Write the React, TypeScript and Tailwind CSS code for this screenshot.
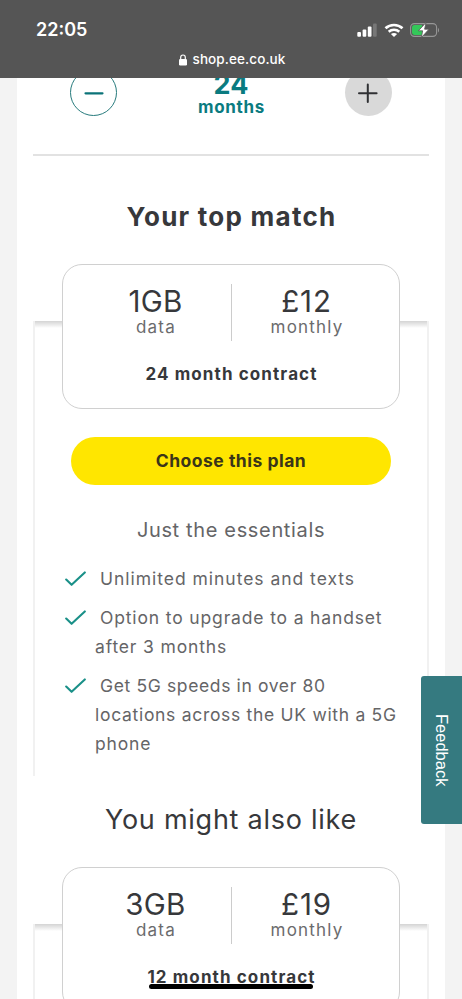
import React from 'react';

const Tick = () => (
  <svg className="absolute left-0 top-[7px]" width="21" height="16" viewBox="0 0 21 16" fill="none">
    <path d="M1.2 8.6L6.6 13.8L19.8 1.4" stroke="#1a9088" strokeWidth="2.1" strokeLinecap="round" strokeLinejoin="round" />
  </svg>
);

const StatusBar = () => (
  <header className="relative z-10 h-[78px] bg-[#555555] text-white">
    <div className="flex h-[60px] items-center justify-between pl-9 pr-[22px]">
      <span className="text-[18px] font-semibold leading-none">22:05</span>
      <div className="flex items-center">
        <svg width="21" height="14" viewBox="0 0 21 14">
          <rect x="0.3" y="9" width="3.7" height="4.8" rx="1" fill="#fff" />
          <rect x="5.6" y="6.4" width="3.7" height="7.4" rx="1" fill="#fff" />
          <rect x="10.8" y="3.4" width="3.7" height="10.4" rx="1" fill="#fff" />
          <rect x="16" y="0.4" width="3.7" height="13.4" rx="1" fill="#777" />
        </svg>
        <svg className="ml-1.5" width="20" height="15" viewBox="0 0 20 15" fill="none" stroke="#fff">
          <path d="M1.5 5.2C6.2 0.9 13.8 0.9 18.5 5.2" strokeWidth="2.7" />
          <path d="M4.7 8.7C7.7 6 12.3 6 15.3 8.7" strokeWidth="2.6" />
          <path d="M10 14L6.9 11C8.6 9.5 11.4 9.5 13.1 11Z" fill="#fff" stroke="none" />
        </svg>
        <svg className="ml-1.5" width="30" height="16" viewBox="0 0 30 16">
          <rect x="0.6" y="1.6" width="26" height="12.8" rx="3.8" fill="none" stroke="#979797" strokeWidth="1.1" />
          <path d="M4.5 3H12V13H4.5A2.4 2.4 0 0 1 2 10.6V5.4A2.4 2.4 0 0 1 4.5 3Z" fill="#34c759" />
          <path d="M28 6V10.4C29.4 9.8 29.4 6.6 28 6Z" fill="#979797" />
          <path d="M16 0.6L8.4 8.8H12.6L11.4 15.6L19 7.2H14.6Z" fill="#fff" stroke="#555555" strokeWidth="0.8" />
        </svg>
      </div>
    </div>
    <div className="-mt-2 flex items-center justify-center pl-[2px]">
      <svg width="8" height="12" viewBox="0 0 8 12">
        <rect x="0" y="5" width="8" height="6.5" rx="1.2" fill="#fff" />
        <path d="M1.7 5.5V3.3A2.3 2.3 0 0 1 6.3 3.3V5.5" fill="none" stroke="#fff" strokeWidth="1.2" />
      </svg>
      <span className="ml-[6px] text-[13.5px] font-medium leading-[15px] tracking-[0.1px]">shop.ee.co.uk</span>
    </div>
  </header>
);

const Stepper = () => (
  <div className="-mt-[9px] flex h-[87px] items-start justify-between border-b-2 border-[#e2e2e2] px-[37px]">
    <button className="flex h-[47px] w-[47px] items-center justify-center rounded-full border border-[#277b7d]">
      <svg width="20" height="20" viewBox="0 0 20 20">
        <path d="M1.5 10.3H18.5" stroke="#0b7378" strokeWidth="2.2" strokeLinecap="round" />
      </svg>
    </button>
    <div className="text-center font-bold text-[#0a7b80]">
      <div className="h-[29px] text-[27px] leading-[31px]">24</div>
      <div className="pl-px text-[17px] leading-[18px] tracking-[0.7px]">months</div>
    </div>
    <button className="flex h-[47px] w-[47px] items-center justify-center rounded-full bg-[#d9d9d9]">
      <svg width="20" height="20" viewBox="0 0 20 20">
        <path d="M1 10.3H18.6M9.8 1.5V19" stroke="#303134" strokeWidth="2" strokeLinecap="round" />
      </svg>
    </button>
  </div>
);

interface PlanProps {
  data: string;
  price: string;
  contract: string;
  children?: React.ReactNode;
}

const Plan = ({ data, price, contract, children }: PlanProps) => (
  <section className="mt-[86px] h-[455px] border-x-2 border-[#f1f1f1] bg-[linear-gradient(#d4d4d4,#ececec_4px,#ffffff_7px)]">
    <div className="relative -top-[57px] mx-auto h-[145px] w-[338px] rounded-[20px] border border-[#d0d0d0] bg-white pt-[21px]">
      <div className="flex justify-center text-center">
        <div className="w-[150px]">
          <div className="text-[29.5px] leading-[31px] tracking-[0.3px] text-[#37383b]">{data}</div>
          <div className="pl-px text-[17px] leading-[21px] tracking-[1.2px] text-[#6b6b6d]">data</div>
        </div>
        <div className="-mt-0.5 h-[57px] w-px bg-[#cccccc]" />
        <div className="w-[150px]">
          <div className="text-[29.5px] leading-[31px] tracking-[0.9px] text-[#37383b]">{price}</div>
          <div className="pl-px text-[17px] leading-[21px] tracking-[1.2px] text-[#6b6b6d]">monthly</div>
        </div>
      </div>
      <div className="mt-[21px] pl-px text-center text-[17px] font-bold leading-6 tracking-[1.1px] text-[#37383b]">{contract}</div>
    </div>
    {children}
  </section>
);

const App = () => (
  <div className="h-[999px] w-[462px] overflow-hidden bg-[#f3f3f3] font-['Inter',sans-serif]">
    <StatusBar />
    <main className="mx-[17px] h-[930px] bg-white px-4">
      <Stepper />
      <h2 className="mt-[43px] pl-px text-center text-[26px] font-bold leading-9 tracking-[1.25px] text-[#37383b]">Your top match</h2>
      <Plan data="1GB" price="£12" contract="24 month contract">
        <div className="-mt-[29px]">
          <button className="mx-auto block h-12 w-80 rounded-full bg-[#ffe600] text-[17.5px] font-bold tracking-[0.5px] text-[#3a3519]">Choose this plan</button>
          <p className="mt-[31px] text-center text-[20px] leading-7 tracking-[0.65px] text-[#656567]">Just the essentials</p>
          <ul className="ml-[30px] mt-5 space-y-[10px] whitespace-nowrap text-[17.5px] leading-[29px] tracking-[0.85px] text-[#656567]">
            <li className="relative pl-[30px]"><Tick /><span className="ml-[5px] tracking-[0.97px]">Unlimited minutes and texts</span></li>
            <li className="relative pl-[30px]"><Tick /><span className="ml-[5px]">Option to upgrade to a handset</span><br />after 3 months</li>
            <li className="relative pl-[30px]"><Tick /><span className="ml-[5px] tracking-[0.63px]">Get 5G speeds in over 80</span><br /><span className="tracking-[0.7px]">locations across the UK with a 5G</span><br />phone</li>
          </ul>
        </div>
      </Plan>
      <h2 className="mt-[26px] text-center text-[27px] leading-9 tracking-[0.75px] text-[#37383b]">You might also like</h2>
      <Plan data="3GB" price="£19" contract="12 month contract" />
    </main>
    <button className="fixed left-[421px] top-[676px] flex h-[148px] w-[45px] items-center justify-center rounded-[3px] bg-[#357a80] pr-1 font-['Liberation_Sans'] text-[16.5px] text-white [writing-mode:vertical-rl]">Feedback</button>
    <div className="fixed left-[149px] top-[984px] h-[5px] w-[164px] rounded-full bg-black" />
  </div>
);

export default App;
